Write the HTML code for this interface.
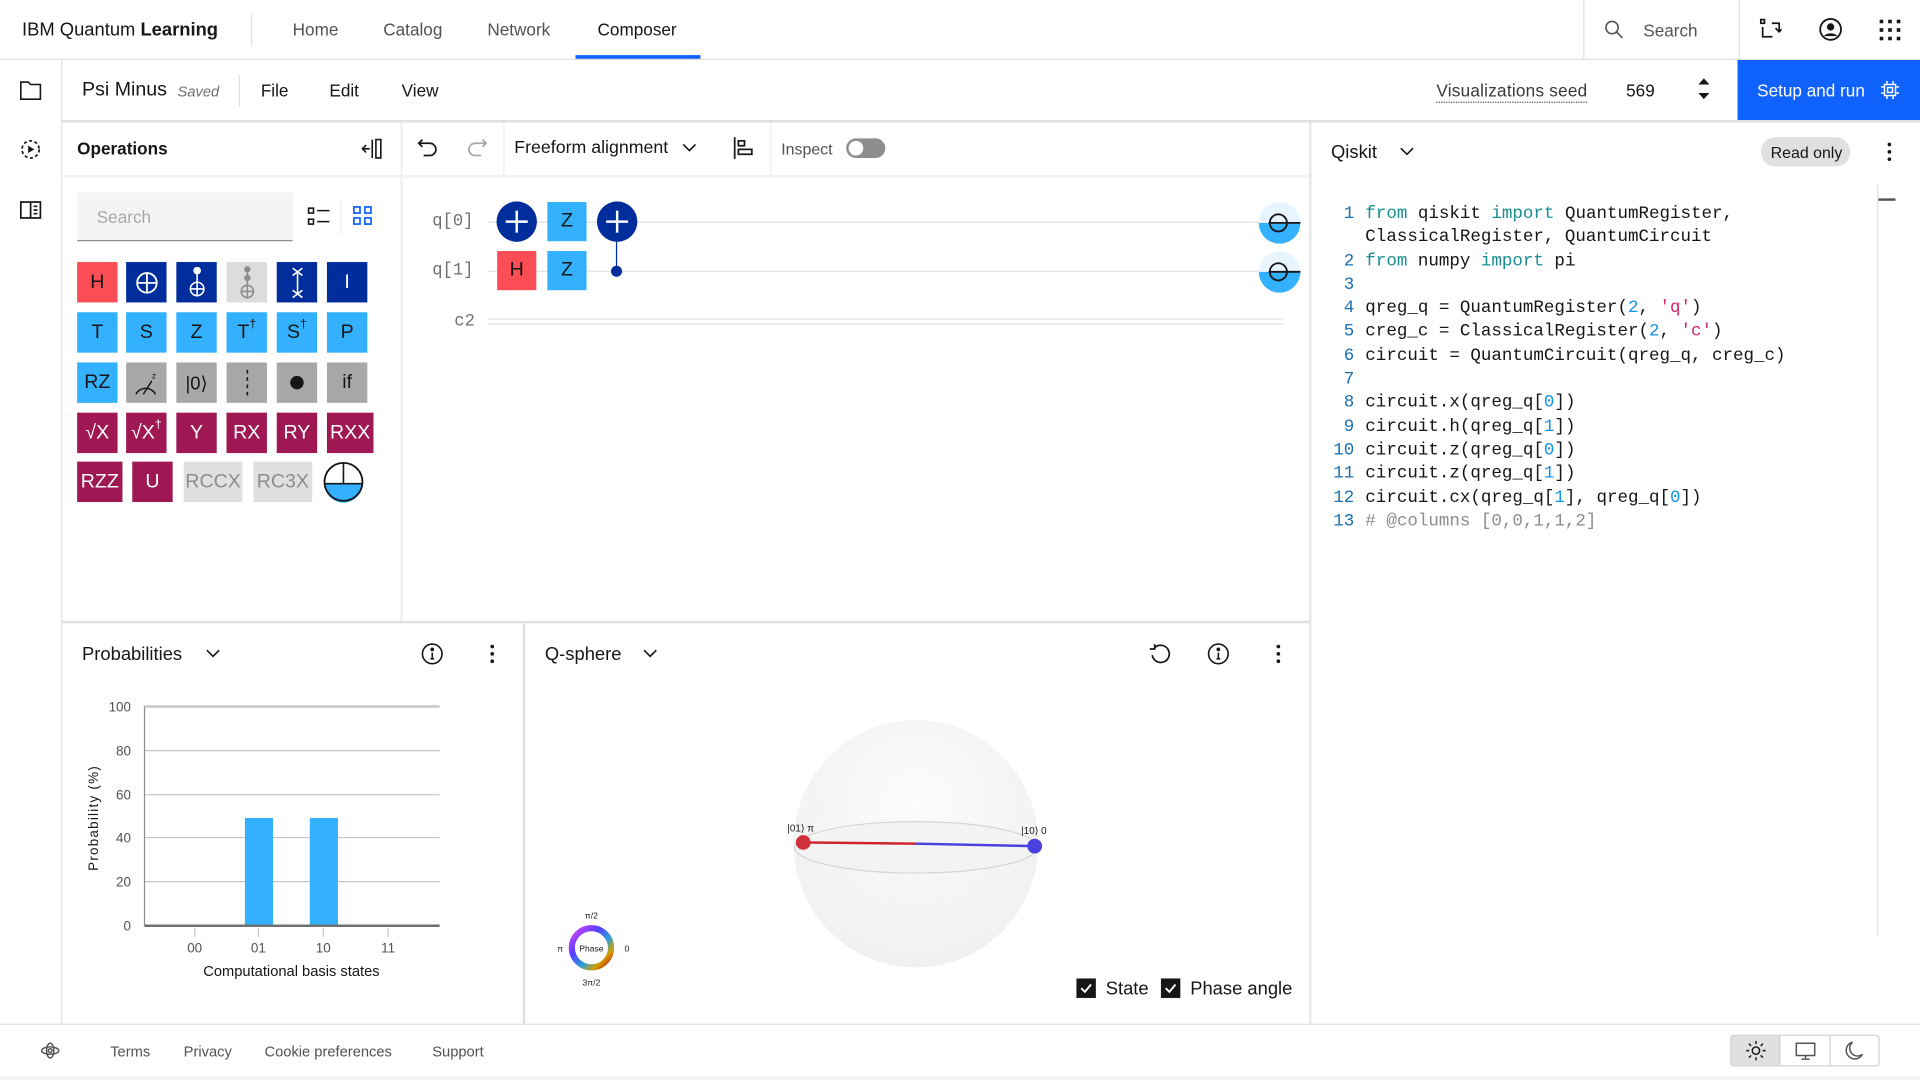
<!DOCTYPE html>
<html><head><meta charset="utf-8"><style>
*{box-sizing:border-box;margin:0;padding:0}
html,body{width:1920px;height:1080px;overflow:hidden;background:#fff}
#w{position:absolute;left:0;top:0;width:1568px;height:882px;transform:scale(1.22449);transform-origin:0 0;font-family:"Liberation Sans",sans-serif;color:#161616}
.a{position:absolute}
.t{position:absolute;white-space:nowrap}
.g{position:absolute;width:33px;height:33px;color:#fff;font-size:16px;display:flex;align-items:center;justify-content:center}
.mono{font-family:"Liberation Mono",monospace}
.ln{position:absolute;left:1070px;width:36px;text-align:right;color:#1a6fb0}
.cd{position:absolute;left:1115px;color:#161616;white-space:nowrap}
.k{color:#198f8f}.n{color:#1192e8}.s{color:#d02670}.c{color:#8d8d8d}
</style></head><body><div id="w">
<!-- header -->
<div class="a" style="left:0;top:48px;width:1568px;height:1px;background:#e0e0e0"></div>
<div class="t" style="left:18px;top:16px;font-size:15px">IBM Quantum <b>Learning</b></div>
<div class="a" style="left:205px;top:12px;width:1px;height:26px;background:#e0e0e0"></div>
<div class="t" style="left:239px;top:16px;font-size:14px;color:#525252">Home</div>
<div class="t" style="left:313px;top:16px;font-size:14px;color:#525252">Catalog</div>
<div class="t" style="left:398px;top:16px;font-size:14px;color:#525252">Network</div>
<div class="t" style="left:488px;top:16px;font-size:14px;color:#161616">Composer</div>
<div class="a" style="left:470px;top:45px;width:102px;height:3px;background:#0f62fe"></div>
<div class="a" style="left:1293px;top:0;width:1px;height:48px;background:#e0e0e0"></div>
<div class="a" style="left:1420px;top:0;width:1px;height:48px;background:#e0e0e0"></div>
<svg class="a" style="left:1310px;top:16px" width="16" height="16" viewBox="0 0 16 16" fill="none" stroke="#525252" stroke-width="1.3"><circle cx="6.5" cy="6.5" r="5"/><path d="M10 10l5 5"/></svg>
<div class="t" style="left:1342px;top:17px;font-size:14px;color:#525252">Search</div>
<svg class="a" style="left:1437px;top:15px" width="18" height="18" viewBox="0 0 18 18" fill="none" stroke="#161616" stroke-width="1.4"><rect x="1" y="1" width="3" height="3"/><path d="M2.5 7v8h8M10 4h6v6M13 8l3 3 3-3" /></svg>
<svg class="a" style="left:1485px;top:14px" width="20" height="20" viewBox="0 0 20 20"><circle cx="10" cy="10" r="8.5" fill="none" stroke="#161616" stroke-width="1.5"/><circle cx="10" cy="8" r="3" fill="#161616"/><path d="M4.5 15.5c2-3 9-3 11 0" fill="#161616"/></svg>
<svg class="a" style="left:1535px;top:16px" width="17" height="17" viewBox="0 0 17 17" fill="#161616"><rect x="0" y="0" width="3" height="3"/><rect x="7" y="0" width="3" height="3"/><rect x="14" y="0" width="3" height="3"/><rect x="0" y="7" width="3" height="3"/><rect x="7" y="7" width="3" height="3"/><rect x="14" y="7" width="3" height="3"/><rect x="0" y="14" width="3" height="3"/><rect x="7" y="14" width="3" height="3"/><rect x="14" y="14" width="3" height="3"/></svg>
<!-- left sidebar -->
<div class="a" style="left:50px;top:49px;width:1px;height:787px;background:#e0e0e0"></div>
<svg class="a" style="left:16px;top:66px" width="18" height="16" viewBox="0 0 18 16" fill="none" stroke="#161616" stroke-width="1.3"><path d="M1 1h6l2 2h8v12H1z"/></svg>
<svg class="a" style="left:16px;top:113px" width="18" height="18" viewBox="0 0 18 18" fill="none" stroke="#161616" stroke-width="1.4" stroke-dasharray="2.5 2"><circle cx="9" cy="9" r="7"/><path d="M7 6v6l5-3z" fill="#161616" stroke="none"/></svg>
<svg class="a" style="left:16px;top:164px" width="18" height="15" viewBox="0 0 18 15" fill="none" stroke="#161616" stroke-width="1.4"><rect x="1" y="1" width="16" height="13"/><path d="M9 1v13M11.5 4.5h3M11.5 7.5h3M11.5 10.5h3"/></svg>
<!-- second bar -->
<div class="t" style="left:67px;top:65px;font-size:16px">Psi Minus</div>
<div class="t" style="left:145px;top:68px;font-size:12px;font-style:italic;color:#6f6f6f">Saved</div>
<div class="a" style="left:195px;top:61px;width:1px;height:26px;background:#e0e0e0"></div>
<div class="t" style="left:213px;top:66px;font-size:14px">File</div>
<div class="t" style="left:269px;top:66px;font-size:14px">Edit</div>
<div class="t" style="left:328px;top:66px;font-size:14px">View</div>
<div class="t" style="left:1173px;top:66px;font-size:14px;color:#393939;border-bottom:1px dotted #525252;padding-bottom:1px;letter-spacing:0.2px">Visualizations seed</div>
<div class="t" style="left:1328px;top:66px;font-size:14px">569</div>
<svg class="a" style="left:1386px;top:63px" width="11" height="19" viewBox="0 0 11 19" fill="#161616"><path d="M1 6l4.5-5 4.5 5zM1 13l4.5 5 4.5-5z"/></svg>
<div class="a" style="left:1419px;top:49px;width:149px;height:49px;background:#0f62fe"></div>
<div class="t" style="left:1435px;top:66px;font-size:14px;color:#fff">Setup and run</div>
<svg class="a" style="left:1536px;top:66px" width="15" height="15" viewBox="0 0 15 15" fill="none" stroke="#fff" stroke-width="1.2"><rect x="3" y="3" width="9" height="9"/><rect x="5.5" y="5.5" width="4" height="4"/><path d="M5 0v3M10 0v3M5 12v3M10 12v3M0 5h3M0 10h3M12 5h3M12 10h3"/></svg>
<div class="a" style="left:50px;top:98px;width:1518px;height:2px;background:#e0e0e0"></div>
<!-- operations -->
<div class="a" style="left:327px;top:100px;width:2px;height:408px;background:#f0f0f0"></div>
<div class="t" style="left:63px;top:113px;font-size:14px;font-weight:bold">Operations</div>
<svg class="a" style="left:295px;top:113px" width="18" height="17" viewBox="0 0 18 17" fill="none" stroke="#161616" stroke-width="1.3"><path d="M1 8.5h6M4 5.5l-3 3 3 3M9 1v15M12 1h4v15h-4z"/></svg>
<div class="a" style="left:50px;top:143px;width:1020px;height:2px;background:#f2f2f2"></div>
<div class="a" style="left:63px;top:157px;width:176px;height:40px;background:#f4f4f4;border-bottom:1px solid #8d8d8d"></div>
<div class="t" style="left:79px;top:169px;font-size:14px;color:#a8a8a8">Search</div>
<svg class="a" style="left:251px;top:169px" width="19" height="16" viewBox="0 0 19 16" fill="none" stroke="#161616" stroke-width="1.3"><rect x="1" y="1" width="4" height="4"/><rect x="1" y="10" width="4" height="4"/><path d="M8 3h10M8 12h10"/></svg>
<svg class="a" style="left:288px;top:168px" width="17" height="17" viewBox="0 0 17 17" fill="none" stroke="#0f62fe" stroke-width="1.4"><rect x="1" y="1" width="5" height="5"/><rect x="10" y="1" width="5" height="5"/><rect x="1" y="10" width="5" height="5"/><rect x="10" y="10" width="5" height="5"/></svg>
<div class="a" style="left:278px;top:162px;width:1px;height:30px;background:#eee"></div>
<!-- gates row1 -->
<div class="g" style="left:63px;top:214px;background:#fa4d56;color:#161616">H</div>
<div class="g" style="left:103px;top:214px;background:#002d9c"><svg width="20" height="20" viewBox="0 0 20 20" fill="none" stroke="#fff" stroke-width="1.5"><circle cx="10" cy="10" r="8"/><path d="M10 2v16M2 10h16"/></svg></div>
<div class="g" style="left:144px;top:214px;background:#002d9c"><svg width="16" height="26" viewBox="0 0 16 26" fill="none" stroke="#fff" stroke-width="1.3"><circle cx="8" cy="3" r="2.5" fill="#fff"/><path d="M8 3v21"/><circle cx="8" cy="18" r="5.5"/><path d="M2.5 18h11"/></svg></div>
<div class="g" style="left:185px;top:214px;background:#dcdcdc"><svg width="16" height="28" viewBox="0 0 16 28" fill="none" stroke="#8d8d8d" stroke-width="1.3"><circle cx="8" cy="3" r="2" fill="#8d8d8d"/><circle cx="8" cy="10" r="2" fill="#8d8d8d"/><path d="M8 3v24"/><circle cx="8" cy="21" r="5"/><path d="M3 21h10"/></svg></div>
<div class="g" style="left:226px;top:214px;background:#002d9c"><svg width="12" height="26" viewBox="0 0 12 26" fill="none" stroke="#fff" stroke-width="1.3"><path d="M2 1l8 6M10 1l-8 6M2 19l8 6M10 19l-8 6M6 4v18"/></svg></div>
<div class="g" style="left:267px;top:214px;background:#002d9c">I</div>
<!-- row2 -->
<div class="g" style="left:63px;top:255px;background:#33b1ff;color:#161616">T</div>
<div class="g" style="left:103px;top:255px;background:#33b1ff;color:#161616">S</div>
<div class="g" style="left:144px;top:255px;background:#33b1ff;color:#161616">Z</div>
<div class="g" style="left:185px;top:255px;background:#33b1ff;color:#161616">T<span style="font-size:10px;position:relative;top:-6px">†</span></div>
<div class="g" style="left:226px;top:255px;background:#33b1ff;color:#161616">S<span style="font-size:10px;position:relative;top:-6px">†</span></div>
<div class="g" style="left:267px;top:255px;background:#33b1ff;color:#161616">P</div>
<!-- row3 -->
<div class="g" style="left:63px;top:296px;background:#33b1ff;color:#161616">RZ</div>
<div class="g" style="left:103px;top:296px;background:#a8a8a8"><svg width="22" height="22" viewBox="0 0 22 22" fill="none" stroke="#161616" stroke-width="1.2"><path d="M2 20a9 9 0 0 1 16 0M8 20l7-11"/><text x="15" y="7" font-size="7" fill="#161616" stroke="none" font-family="Liberation Sans">z</text></svg></div>
<div class="g" style="left:144px;top:296px;background:#a8a8a8;color:#161616;font-size:15px">|0⟩</div>
<div class="g" style="left:185px;top:296px;background:#a8a8a8"><svg width="4" height="22"><path d="M2 0v22" stroke="#161616" stroke-width="1.3" stroke-dasharray="3 3"/></svg></div>
<div class="g" style="left:226px;top:296px;background:#a8a8a8"><div style="width:11px;height:11px;border-radius:50%;background:#161616"></div></div>
<div class="g" style="left:267px;top:296px;background:#a8a8a8;color:#161616">if</div>
<!-- row4 -->
<div class="g" style="left:63px;top:337px;background:#9f1853">√X</div>
<div class="g" style="left:103px;top:337px;background:#9f1853">√X<span style="font-size:10px;position:relative;top:-6px">†</span></div>
<div class="g" style="left:144px;top:337px;background:#9f1853">Y</div>
<div class="g" style="left:185px;top:337px;background:#9f1853">RX</div>
<div class="g" style="left:226px;top:337px;background:#9f1853">RY</div>
<div class="g" style="left:267px;top:337px;background:#9f1853;width:38px">RXX</div>
<!-- row5 -->
<div class="g" style="left:63px;top:377px;background:#9f1853;width:37px">RZZ</div>
<div class="g" style="left:108px;top:377px;background:#9f1853">U</div>
<div class="g" style="left:150px;top:377px;background:#e0e0e0;color:#8d8d8d;width:48px">RCCX</div>
<div class="g" style="left:207px;top:377px;background:#e0e0e0;color:#8d8d8d;width:48px">RC3X</div>
<svg class="a" style="left:263px;top:376px" width="35" height="35" viewBox="0 0 35 35"><path d="M2 19a15.5 15.5 0 0 0 31 0z" fill="#33b1ff"/><circle cx="17.5" cy="17.5" r="15.5" fill="none" stroke="#161616" stroke-width="1.5"/><path d="M17.5 2v17M2 19h31" stroke="#161616" stroke-width="1.3"/></svg>
<!-- circuit toolbar -->
<svg class="a" style="left:341px;top:113px" width="17" height="16" viewBox="0 0 17 16" fill="none" stroke="#161616" stroke-width="1.4"><path d="M4 1L1 4l3 3M1 4h9a5 5 0 0 1 0 10H5"/></svg>
<svg class="a" style="left:381px;top:113px" width="17" height="16" viewBox="0 0 17 16" fill="none" stroke="#a8a8a8" stroke-width="1.4"><path d="M13 1l3 3-3 3M16 4H7a5 5 0 0 0 0 10h5"/></svg>
<div class="a" style="left:411px;top:100px;width:1px;height:43px;background:#eee"></div>
<div class="t" style="left:420px;top:113px;font-size:14.5px;width:126px;overflow:hidden">Freeform alignment</div>
<svg class="a" style="left:557px;top:117px" width="12" height="8" viewBox="0 0 12 8" fill="none" stroke="#161616" stroke-width="1.3"><path d="M1 1l5 5 5-5"/></svg>
<svg class="a" style="left:599px;top:112px" width="17" height="18" viewBox="0 0 17 18" fill="none" stroke="#161616" stroke-width="1.4"><path d="M1 0v18"/><rect x="4" y="3" width="5" height="4"/><rect x="4" y="10" width="11" height="4"/></svg>
<div class="a" style="left:629px;top:100px;width:1px;height:43px;background:#eee"></div>
<div class="t" style="left:638px;top:114px;font-size:13px;color:#525252">Inspect</div>
<div class="a" style="left:691px;top:113px;width:32px;height:16px;border-radius:8px;background:#8d8d8d"></div>
<div class="a" style="left:693px;top:115px;width:12px;height:12px;border-radius:50%;background:#fff"></div>
<!-- circuit -->
<div class="t mono" style="left:353px;top:173px;font-size:14px;color:#6f6f6f">q[0]</div>
<div class="t mono" style="left:353px;top:213px;font-size:14px;color:#6f6f6f">q[1]</div>
<div class="t mono" style="left:371px;top:255px;font-size:14px;color:#6f6f6f">c2</div>
<div class="a" style="left:398px;top:181px;width:650px;height:1px;background:#e0e0e0"></div>
<div class="a" style="left:398px;top:221px;width:650px;height:1px;background:#e0e0e0"></div>
<div class="a" style="left:398px;top:260px;width:650px;height:5px;border-top:1px solid #e0e0e0;border-bottom:1px solid #e0e0e0"></div>
<svg class="a" style="left:405px;top:164px" width="34" height="34" viewBox="0 0 34 34"><circle cx="17" cy="17" r="16.5" fill="#002d9c"/><path d="M17 8v18M8 17h18" stroke="#fff" stroke-width="2"/></svg>
<div class="g" style="left:447px;top:165px;width:32px;height:32px;background:#33b1ff;color:#161616">Z</div>
<div class="a" style="left:503px;top:181px;width:1px;height:40px;background:#002d9c"></div>
<svg class="a" style="left:487px;top:164px" width="34" height="34" viewBox="0 0 34 34"><circle cx="17" cy="17" r="16.5" fill="#002d9c"/><path d="M17 8v18M8 17h18" stroke="#fff" stroke-width="2"/></svg>
<div class="a" style="left:499px;top:217px;width:9px;height:9px;border-radius:50%;background:#002d9c"></div>
<div class="g" style="left:406px;top:205px;width:32px;height:32px;background:#fa4d56;color:#161616">H</div>
<div class="g" style="left:447px;top:205px;width:32px;height:32px;background:#33b1ff;color:#161616">Z</div>
<svg class="a" style="left:1027px;top:164px" width="36" height="36" viewBox="0 0 36 36"><path d="M1 18a17 17 0 0 0 34 0z" fill="#33b1ff"/><path d="M1 18a17 17 0 0 1 34 0z" fill="#e8f4ff"/><circle cx="17" cy="18" r="7" fill="none" stroke="#161616" stroke-width="1.5"/><path d="M9 18h26" stroke="#161616" stroke-width="1.5"/></svg>
<svg class="a" style="left:1027px;top:204px" width="36" height="36" viewBox="0 0 36 36"><path d="M1 18a17 17 0 0 0 34 0z" fill="#33b1ff"/><path d="M1 18a17 17 0 0 1 34 0z" fill="#e8f4ff"/><circle cx="17" cy="18" r="7" fill="none" stroke="#161616" stroke-width="1.5"/><path d="M9 18h26" stroke="#161616" stroke-width="1.5"/></svg>
<!-- code panel -->
<div class="a" style="left:1069px;top:100px;width:2px;height:736px;background:#e8e8e8"></div>
<div class="t" style="left:1087px;top:116px;font-size:15px">Qiskit</div>
<svg class="a" style="left:1143px;top:120px" width="12" height="8" viewBox="0 0 12 8" fill="none" stroke="#161616" stroke-width="1.3"><path d="M1 1l5 5 5-5"/></svg>
<div class="a" style="left:1438px;top:112px;width:73px;height:24px;border-radius:12px;background:#e0e0e0"></div>
<div class="t" style="left:1446px;top:117px;font-size:13px;color:#161616">Read only</div>
<svg class="a" style="left:1541px;top:116px" width="4" height="16" viewBox="0 0 4 16" fill="#161616"><circle cx="2" cy="2" r="1.5"/><circle cx="2" cy="8" r="1.5"/><circle cx="2" cy="14" r="1.5"/></svg>
<div class="a" style="left:1533px;top:150px;width:1px;height:615px;background:#e0e0e0"></div>
<div class="a" style="left:1534px;top:162px;width:14px;height:2px;background:#555"></div>
<div class="mono" style="font-size:14.3px;line-height:19.3px">
<div class="ln" style="top:166px">1</div><div class="cd" style="top:166px"><span class="k">from</span> qiskit <span class="k">import</span> QuantumRegister,</div>
<div class="cd" style="top:185px">ClassicalRegister, QuantumCircuit</div>
<div class="ln" style="top:205px">2</div><div class="cd" style="top:205px"><span class="k">from</span> numpy <span class="k">import</span> pi</div>
<div class="ln" style="top:224px">3</div>
<div class="ln" style="top:243px">4</div><div class="cd" style="top:243px">qreg_q = QuantumRegister(<span class="n">2</span>, <span class="s">'q'</span>)</div>
<div class="ln" style="top:262px">5</div><div class="cd" style="top:262px">creg_c = ClassicalRegister(<span class="n">2</span>, <span class="s">'c'</span>)</div>
<div class="ln" style="top:282px">6</div><div class="cd" style="top:282px">circuit = QuantumCircuit(qreg_q, creg_c)</div>
<div class="ln" style="top:301px">7</div>
<div class="ln" style="top:320px">8</div><div class="cd" style="top:320px">circuit.x(qreg_q[<span class="n">0</span>])</div>
<div class="ln" style="top:340px">9</div><div class="cd" style="top:340px">circuit.h(qreg_q[<span class="n">1</span>])</div>
<div class="ln" style="top:359px">10</div><div class="cd" style="top:359px">circuit.z(qreg_q[<span class="n">0</span>])</div>
<div class="ln" style="top:378px">11</div><div class="cd" style="top:378px">circuit.z(qreg_q[<span class="n">1</span>])</div>
<div class="ln" style="top:398px">12</div><div class="cd" style="top:398px">circuit.cx(qreg_q[<span class="n">1</span>], qreg_q[<span class="n">0</span>])</div>
<div class="ln" style="top:417px">13</div><div class="cd c" style="top:417px"># @columns [0,0,1,1,2]</div>
</div>
<!-- bottom panels -->
<div class="a" style="left:50px;top:507px;width:1020px;height:2px;background:#e0e0e0"></div>
<div class="a" style="left:427px;top:509px;width:2px;height:327px;background:#e0e0e0"></div>
<div class="t" style="left:67px;top:526px;font-size:15px">Probabilities</div>
<svg class="a" style="left:168px;top:530px" width="12" height="8" viewBox="0 0 12 8" fill="none" stroke="#161616" stroke-width="1.3"><path d="M1 1l5 5 5-5"/></svg>
<svg class="a" style="left:344px;top:525px" width="18" height="18" viewBox="0 0 18 18" fill="none" stroke="#161616" stroke-width="1.3"><circle cx="9" cy="9" r="8"/><path d="M9 8v5M7.5 13h3"/><circle cx="9" cy="5.3" r=".9" fill="#161616"/></svg>
<svg class="a" style="left:400px;top:526px" width="4" height="16" viewBox="0 0 4 16" fill="#161616"><circle cx="2" cy="2" r="1.5"/><circle cx="2" cy="8" r="1.5"/><circle cx="2" cy="14" r="1.5"/></svg>
<svg class="a" style="left:60px;top:565px" width="310" height="240" viewBox="60 565 310 240" font-family="Liberation Sans" font-size="11" fill="#525252">
<path d="M118 577H359" stroke="#c6c6c6" stroke-width="2"/>
<path d="M118 613H359M118 649H359M118 684H359M118 720H359" stroke="#c6c6c6" stroke-width="1"/>
<path d="M118 577V756" stroke="#8d8d8d" stroke-width="1"/>
<rect x="200" y="668" width="23" height="88" fill="#33b1ff"/>
<rect x="253" y="668" width="23" height="88" fill="#33b1ff"/>
<path d="M118 756H359" stroke="#6f6f6f" stroke-width="2"/>
<path d="M159 758v7M211 758v7M264 758v7M317 758v7" stroke="#c6c6c6"/>
<g text-anchor="end"><text x="107" y="581">100</text><text x="107" y="617">80</text><text x="107" y="653">60</text><text x="107" y="688">40</text><text x="107" y="724">20</text><text x="107" y="760">0</text></g>
<g text-anchor="middle"><text x="159" y="778">00</text><text x="211" y="778">01</text><text x="264" y="778">10</text><text x="317" y="778">11</text>
<text x="238" y="797" font-size="12" fill="#161616">Computational basis states</text>
<text transform="translate(80 668) rotate(-90)" font-size="11" fill="#161616" letter-spacing="1">Probability (%)</text></g>
</svg>
<div class="t" style="left:445px;top:526px;font-size:15px">Q-sphere</div>
<svg class="a" style="left:525px;top:530px" width="12" height="8" viewBox="0 0 12 8" fill="none" stroke="#161616" stroke-width="1.3"><path d="M1 1l5 5 5-5"/></svg>
<svg class="a" style="left:938px;top:525px" width="18" height="18" viewBox="0 0 18 18" fill="none" stroke="#161616" stroke-width="1.4"><path d="M5 4a7 7 0 1 1-2 6M5 1v4H1"/></svg>
<svg class="a" style="left:986px;top:525px" width="18" height="18" viewBox="0 0 18 18" fill="none" stroke="#161616" stroke-width="1.3"><circle cx="9" cy="9" r="8"/><path d="M9 8v5M7.5 13h3"/><circle cx="9" cy="5.3" r=".9" fill="#161616"/></svg>
<svg class="a" style="left:1042px;top:526px" width="4" height="16" viewBox="0 0 4 16" fill="#161616"><circle cx="2" cy="2" r="1.5"/><circle cx="2" cy="8" r="1.5"/><circle cx="2" cy="14" r="1.5"/></svg>
<svg class="a" style="left:440px;top:580px" width="440" height="230" viewBox="440 580 440 230" font-family="Liberation Sans">
<defs><radialGradient id="sg" cx="0.5" cy="0.35" r="0.65"><stop offset="0" stop-color="#fcfcfc"/><stop offset="1" stop-color="#f0f0f0"/></radialGradient>
<linearGradient id="pw" x1="0" y1="0" x2="1" y2="1"><stop offset="0" stop-color="#e040fb"/><stop offset=".35" stop-color="#5040ff"/><stop offset=".6" stop-color="#2e9ed8"/><stop offset=".8" stop-color="#d4a000"/><stop offset="1" stop-color="#c00000"/></linearGradient></defs>
<ellipse cx="748" cy="689" rx="100" ry="101" fill="url(#sg)"/>
<ellipse cx="748" cy="692" rx="99" ry="21" fill="#f3f3f3" stroke="#d6d6d6" stroke-width="1"/>
<path d="M656 688L748 689" stroke="#d0202a" stroke-width="2"/>
<path d="M748 689L845 691" stroke="#4a40e0" stroke-width="2"/>
<circle cx="656" cy="688" r="6" fill="#d0303a"/>
<circle cx="845" cy="691" r="6" fill="#4a40e0"/>
<text x="643" y="679" font-size="8" fill="#161616">|01⟩ π</text>
<text x="834" y="681" font-size="8" fill="#161616">|10⟩ 0</text>
<circle cx="483" cy="774" r="16" fill="none" stroke="url(#pw)" stroke-width="5"/>
<text x="483" y="777" font-size="7" text-anchor="middle" fill="#161616">Phase</text>
<text x="483" y="750" font-size="7" text-anchor="middle" fill="#161616">π/2</text>
<text x="483" y="805" font-size="7" text-anchor="middle" fill="#161616">3π/2</text>
<text x="455" y="777" font-size="7" fill="#161616">π</text>
<text x="510" y="777" font-size="7" fill="#161616">0</text>
</svg>
<svg class="a" style="left:879px;top:799px" width="16" height="16"><rect width="16" height="16" fill="#161616"/><path d="M4 8l3 3 5-6" stroke="#fff" stroke-width="1.6" fill="none"/></svg>
<div class="t" style="left:903px;top:799px;font-size:15px">State</div>
<svg class="a" style="left:948px;top:799px" width="16" height="16"><rect width="16" height="16" fill="#161616"/><path d="M4 8l3 3 5-6" stroke="#fff" stroke-width="1.6" fill="none"/></svg>
<div class="t" style="left:972px;top:799px;font-size:15px">Phase angle</div>
<!-- footer -->
<div class="a" style="left:0;top:836px;width:1568px;height:1px;background:#e0e0e0"></div>
<div class="a" style="left:0;top:879px;width:1568px;height:3px;background:#f4f4f4"></div>
<svg class="a" style="left:33px;top:851px" width="16" height="14" viewBox="0 0 16 14" fill="none" stroke="#525252" stroke-width="1.2"><ellipse cx="8" cy="7" rx="7" ry="3"/><ellipse cx="8" cy="7" rx="3" ry="6"/><circle cx="8" cy="7" r="1.5"/></svg>
<div class="t" style="left:90px;top:852px;font-size:12px;color:#525252">Terms</div>
<div class="t" style="left:150px;top:852px;font-size:12px;color:#525252">Privacy</div>
<div class="t" style="left:216px;top:852px;font-size:12px;color:#525252">Cookie preferences</div>
<div class="t" style="left:353px;top:852px;font-size:12px;color:#525252">Support</div>
<div class="a" style="left:1413px;top:845px;width:122px;height:26px;border:1px solid #d0d0d0;border-radius:3px;overflow:hidden;display:flex">
<div style="width:40px;height:100%;background:#e0e0e0;border-right:1px solid #d0d0d0;display:flex;align-items:center;justify-content:center"><svg width="16" height="16" viewBox="0 0 16 16" fill="none" stroke="#161616" stroke-width="1.2"><circle cx="8" cy="8" r="3"/><path d="M8 0v2.5M8 13.5V16M0 8h2.5M13.5 8H16M2.3 2.3l1.8 1.8M11.9 11.9l1.8 1.8M2.3 13.7l1.8-1.8M11.9 4.1l1.8-1.8"/></svg></div>
<div style="width:41px;height:100%;border-right:1px solid #d0d0d0;display:flex;align-items:center;justify-content:center"><svg width="17" height="15" viewBox="0 0 17 15" fill="none" stroke="#525252" stroke-width="1.2"><rect x="1" y="1" width="15" height="10"/><path d="M8.5 11v3M5 14h7"/></svg></div>
<div style="flex:1;display:flex;align-items:center;justify-content:center"><svg width="15" height="16" viewBox="0 0 15 16" fill="none" stroke="#525252" stroke-width="1.2"><path d="M6 1a7 7 0 1 0 8 10A6 6 0 0 1 6 1z"/></svg></div>
</div>
</div></body></html>
